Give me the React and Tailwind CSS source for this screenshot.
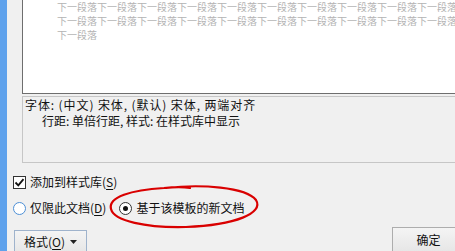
import React from "react";

const font = { fontFamily: '"Noto Sans CJK SC", "Liberation Sans", sans-serif' };

function PreviewRow({ count }) {
  return <div className="whitespace-nowrap">{"下一段落".repeat(count)}</div>;
}

function Check() {
  return (
    <span className="flex h-[13px] w-[13px] shrink-0 items-center justify-center border border-[#333333] bg-white">
      <svg width="11" height="11" viewBox="0 0 11 11">
        <path d="M1.5 5.5 L4.3 8.3 L9.5 2.2" fill="none" stroke="#111" strokeWidth="1.8" />
      </svg>
    </span>
  );
}

function Radio({ checked, hover }) {
  return (
    <span
      className={`flex h-[13px] w-[13px] shrink-0 items-center justify-center rounded-full border bg-white ${
        hover ? "border-[#4d8fd6]" : "border-[#333333]"
      }`}
    >
      {checked ? <span className="h-[5px] w-[5px] rounded-full bg-[#111111]" /> : null}
    </span>
  );
}

export default function App() {
  return (
    <div className="relative flex h-[251px] w-[455px] overflow-hidden bg-[#f0f0f0] text-[#111111]" style={font}>
      <div className="w-[7px] shrink-0 bg-[#5fa2ec]" />
      <div className="flex min-w-0 flex-1 flex-col pl-[6px]">
        <div className="ml-[9px] h-[94px] shrink-0 overflow-hidden border-b border-l border-[#6e6e6e] bg-white pl-[34px] text-[10px] leading-[14px] text-[#b3b3b3]">
          <PreviewRow count={11} />
          <PreviewRow count={10} />
          <PreviewRow count={1} />
        </div>

        <div className="ml-[9px] mt-[2px] h-[67px] shrink-0 border border-r-0 border-[#c6c6c6] pl-[2px] text-[12px] leading-[16px]">
          <div className="whitespace-nowrap tracking-[0.9px]">字体: (中文) 宋体, (默认) 宋体, 两端对齐</div>
          <div className="whitespace-nowrap pl-[17px]">行距: 单倍行距, 样式: 在样式库中显示</div>
        </div>

        <label className="mt-[11px] flex items-center gap-[4px] text-[12px] leading-[16px]">
          <Check />
          <span>
            添加到样式库(<span className="underline underline-offset-2">S</span>)
          </span>
        </label>

        <div className="mt-[10px] flex items-center text-[12px] leading-[16px]">
          <Radio hover />
          <span className="ml-[4px]">
            仅限此文档(<span className="underline underline-offset-2">D</span>)
          </span>
          <span className="ml-[13px]">
            <Radio checked />
          </span>
          <span className="ml-[4px]">基于该模板的新文档</span>
        </div>

        <div className="mt-[11px] flex items-start justify-between">
          <button
            type="button"
            className="ml-[1px] mt-[3px] flex h-[24px] w-[73px] items-center justify-center gap-[5px] border border-[#9fb3cc] bg-gradient-to-b from-[#f4f4f4] to-[#e6e6e6] text-[12px]"
          >
            <span>
              格式(<span className="underline underline-offset-2">O</span>)
            </span>
            <svg width="7" height="4" viewBox="0 0 7 4">
              <path d="M0 0 H7 L3.5 4 Z" fill="#222" />
            </svg>
          </button>
          <button
            type="button"
            className="mr-[-10px] h-[26px] w-[73px] border border-[#adadad] bg-gradient-to-b from-[#f4f4f4] to-[#e6e6e6] text-[12px]"
          >
            确定
          </button>
        </div>
      </div>

      <svg className="pointer-events-none absolute left-[106px] top-[183px]" width="156" height="48" viewBox="0 0 156 48">
        <path
          d="M60 5 C95 1 140 4 150 17 C158 30 130 42 80 44 C40 45 8 38 5 26 C2 14 25 7 58 5 C68 4 78 4 84 5"
          fill="none"
          stroke="#d90000"
          strokeWidth="2.2"
          strokeLinecap="round"
        />
      </svg>
    </div>
  );
}
